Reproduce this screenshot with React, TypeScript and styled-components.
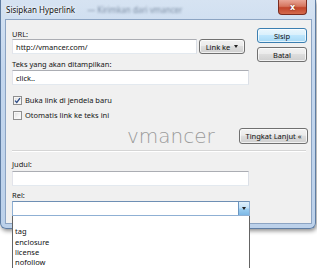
import React from 'react';
import styled, { createGlobalStyle } from 'styled-components';

const GlobalStyle = createGlobalStyle`
  html, body {
    margin: 0;
    padding: 0;
    background: #fff;
    overflow: hidden;
  }
  body {
    font-family: "Noto Sans", "Open Sans", sans-serif;
    font-size: 7.5px;
    color: #161616;
  }
  * {
    box-sizing: border-box;
  }
`;

const Page = styled.div`
  width: 317px;
  height: 268px;
  overflow: hidden;
`;

const Window = styled.div`
  width: 316px;
  height: 229px;
  display: flex;
  flex-direction: column;
  padding: 0 3px 4px 4px;
  background: linear-gradient(180deg, #d6e3f2 0%, #c4d7ee 30%, #bcd1ea 100%);
  border: 1px solid #5f7da3;
  border-top: none;
  border-radius: 0 0 6px 6px;
  box-shadow: 1px 2px 4px rgba(0, 0, 0, 0.45);
`;

const TitleBar = styled.div`
  height: 19px;
  display: flex;
  align-items: center;
  padding-left: 1px;
`;

const Title = styled.span`
  font-size: 8px;
  color: #111;
  text-shadow: 0 0 4px #fff, 0 0 2px #fff;
`;

const Behind = styled.span`
  margin-left: 12px;
  font-size: 8px;
  color: #7d8ea4;
  filter: blur(1.3px);
`;

const CloseButton = styled.div`
  margin-left: auto;
  margin-right: 5px;
  align-self: flex-start;
  width: 29px;
  height: 15px;
  display: flex;
  align-items: center;
  justify-content: center;
  border: 1px solid #7a2c20;
  border-top: none;
  border-radius: 0 0 4px 4px;
  background: linear-gradient(180deg, #e9a596 0%, #d6765f 45%, #c2452b 55%, #d46a4c 100%);
  color: #fff;
  font-family: "DejaVu Sans", sans-serif;
  font-weight: bold;
  font-size: 8px;
  text-shadow: 0 0 2px #5a1a10;
`;

const Client = styled.div`
  flex: 1;
  background: #f0f0f0;
  border: 1px solid #8ca4c3;
  padding: 8px 3px 0 6px;
  display: flex;
  flex-direction: column;
`;

const TopSection = styled.div`
  display: flex;
  gap: 8px;
`;

const MainCol = styled.div`
  width: 237px;
  display: flex;
  flex-direction: column;
`;

const ButtonCol = styled.div`
  width: 50px;
  display: flex;
  flex-direction: column;
  gap: 4px;
`;

const Label = styled.div<{ $top?: number }>`
  height: 10px;
  line-height: 10px;
  margin-top: ${(p) => p.$top ?? 0}px;
`;

const Row = styled.div<{ $top?: number }>`
  display: flex;
  align-items: center;
  gap: 2px;
  margin-top: ${(p) => p.$top ?? 0}px;
`;

const TextBox = styled.div<{ $width?: number; $top?: number }>`
  width: ${(p) => (p.$width ? `${p.$width}px` : '100%')};
  height: 15px;
  margin-top: ${(p) => p.$top ?? 0}px;
  display: flex;
  align-items: center;
  padding-left: 3px;
  background: #fff;
  border: 1px solid;
  border-color: #abadb3 #dbdfe6 #e3e9ef #e2e3ea;
  color: #111;
`;

const Button = styled.div<{ $width?: number; $default?: boolean }>`
  width: ${(p) => (p.$width ? `${p.$width}px` : '100%')};
  height: 15px;
  display: flex;
  align-items: center;
  justify-content: center;
  gap: 4px;
  border: 1px solid ${(p) => (p.$default ? '#3c7fb1' : '#707070')};
  border-radius: 3px;
  background: ${(p) =>
    p.$default
      ? 'linear-gradient(180deg, #eaf6fd 0%, #d9f0fc 45%, #bee6fd 50%, #a7d9f5 100%)'
      : 'linear-gradient(180deg, #f2f2f2 0%, #ebebeb 45%, #dddddd 50%, #cfcfcf 100%)'};
  box-shadow: inset 0 0 0 1px rgba(255, 255, 255, 0.7);
  color: #111;
  white-space: nowrap;
`;

const Caret = styled.span`
  width: 0;
  height: 0;
  border-left: 2.5px solid transparent;
  border-right: 2.5px solid transparent;
  border-top: 3px solid #222;
`;

const CheckRow = styled.div<{ $top: number }>`
  height: 12px;
  display: flex;
  align-items: center;
  gap: 3px;
  margin-top: ${(p) => p.$top}px;
  padding-left: 1px;
`;

const Box = styled.div`
  width: 9px;
  height: 9px;
  border: 1px solid #8f8f8f;
  background: linear-gradient(135deg, #dcdcdc 0%, #f4f4f4 60%, #fff 100%);
  box-shadow: inset 0 0 0 1px #f6f6f6;
  display: flex;
  align-items: center;
  justify-content: center;
`;

const AdvancedRow = styled.div`
  display: flex;
  align-items: center;
  margin-top: 7px;
  height: 16px;
`;

const Watermark = styled.span`
  margin-left: 115px;
  font-family: "DejaVu Sans", "Liberation Sans", sans-serif;
  font-weight: 200;
  font-size: 20px;
  color: #9a9a9a;
  line-height: 16px;
`;

const AdvancedButton = styled(Button)`
  margin-left: auto;
  height: 16px;
`;

const Separator = styled.div`
  margin: 6px 2px 0 0;
  height: 2px;
  border-top: 1px solid #d5d5d5;
  border-bottom: 1px solid #fff;
`;

const Field = styled.div`
  width: 237px;
  display: flex;
  flex-direction: column;
`;

const SelectWrap = styled.div`
  position: relative;
  width: 238px;
  margin-top: 1px;
`;

const SelectBox = styled.div`
  height: 15px;
  display: flex;
  justify-content: flex-end;
  background: #fff;
  border: 1px solid;
  border-color: #6e8fb4 #8fb0d4 #8fb0d4 #8fb0d4;
`;

const DropButton = styled.div`
  width: 11px;
  height: 100%;
  display: flex;
  align-items: center;
  justify-content: center;
  border-left: 1px solid #6b96c1;
  background: linear-gradient(180deg, #e1f1fc 0%, #c3e1f7 45%, #9ccdf0 55%, #7db9e6 100%);
`;

const ListBox = styled.div`
  position: absolute;
  top: 100%;
  left: 0;
  width: 238px;
  height: 52px;
  overflow: hidden;
  background: #fff;
  border: 1px solid #646464;
  border-top: none;
  border-bottom: none;
  z-index: 2;
`;

const Option = styled.div`
  height: 10.3px;
  line-height: 10.3px;
  padding-left: 2px;
  color: #111;
`;

const relOptions = ['', 'tag', 'enclosure', 'license', 'nofollow'];

const Check = () => (
  <svg width="7" height="7" viewBox="0 0 7 7">
    <path d="M1 3.6 L2.8 5.4 L6 1.2" fill="none" stroke="#2b4a85" strokeWidth="1.3" />
  </svg>
);

export default function App() {
  return (
    <Page>
      <GlobalStyle />
      <Window>
        <TitleBar>
          <Title>Sisipkan Hyperlink</Title>
          <Behind>— Kirimkan dari vmancer</Behind>
          <CloseButton>x</CloseButton>
        </TitleBar>
        <Client>
          <TopSection>
            <MainCol>
              <Label $top={1}>URL:</Label>
              <Row>
                <TextBox $width={185}>http://vmancer.com/</TextBox>
                <Button $width={46}>
                  Link ke <Caret />
                </Button>
              </Row>
              <Label $top={5}>Teks yang akan ditampilkan:</Label>
              <TextBox $top={1}>click..</TextBox>
              <CheckRow $top={9}>
                <Box>
                  <Check />
                </Box>
                Buka link di jendela baru
              </CheckRow>
              <CheckRow $top={3}>
                <Box />
                Otomatis link ke teks ini
              </CheckRow>
            </MainCol>
            <ButtonCol>
              <Button $default>Sisip</Button>
              <Button>Batal</Button>
            </ButtonCol>
          </TopSection>
          <AdvancedRow>
            <Watermark>vmancer</Watermark>
            <AdvancedButton $width={69}>Tingkat Lanjut «</AdvancedButton>
          </AdvancedRow>
          <Separator />
          <Field>
            <Label $top={7}>Judul:</Label>
            <TextBox $top={2} />
            <Label $top={4}>Rel:</Label>
          </Field>
          <SelectWrap>
            <SelectBox>
              <DropButton>
                <Caret />
              </DropButton>
            </SelectBox>
            <ListBox>
              {relOptions.map((o, i) => (
                <Option key={i}>{o}</Option>
              ))}
            </ListBox>
          </SelectWrap>
        </Client>
      </Window>
    </Page>
  );
}
